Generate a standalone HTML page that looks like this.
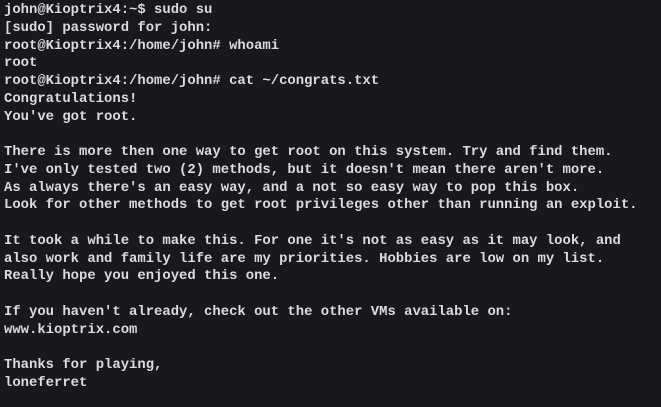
<!DOCTYPE html>
<html><head><style>
html,body{margin:0;padding:0;width:661px;height:407px;overflow:hidden;background:#17191e;}
pre{margin:0;position:absolute;left:4px;top:2px;font-family:"Liberation Mono",monospace;font-size:13.9px;line-height:17.75px;color:#dcdcdc;font-weight:bold;}
</style></head><body>
<pre>john@Kioptrix4:~$ sudo su
[sudo] password for john:
root@Kioptrix4:/home/john# whoami
root
root@Kioptrix4:/home/john# cat ~/congrats.txt
Congratulations!
You've got root.

There is more then one way to get root on this system. Try and find them.
I've only tested two (2) methods, but it doesn't mean there aren't more.
As always there's an easy way, and a not so easy way to pop this box.
Look for other methods to get root privileges other than running an exploit.

It took a while to make this. For one it's not as easy as it may look, and
also work and family life are my priorities. Hobbies are low on my list.
Really hope you enjoyed this one.

If you haven't already, check out the other VMs available on:
www.kioptrix.com

Thanks for playing,
loneferret</pre>
</body></html>
